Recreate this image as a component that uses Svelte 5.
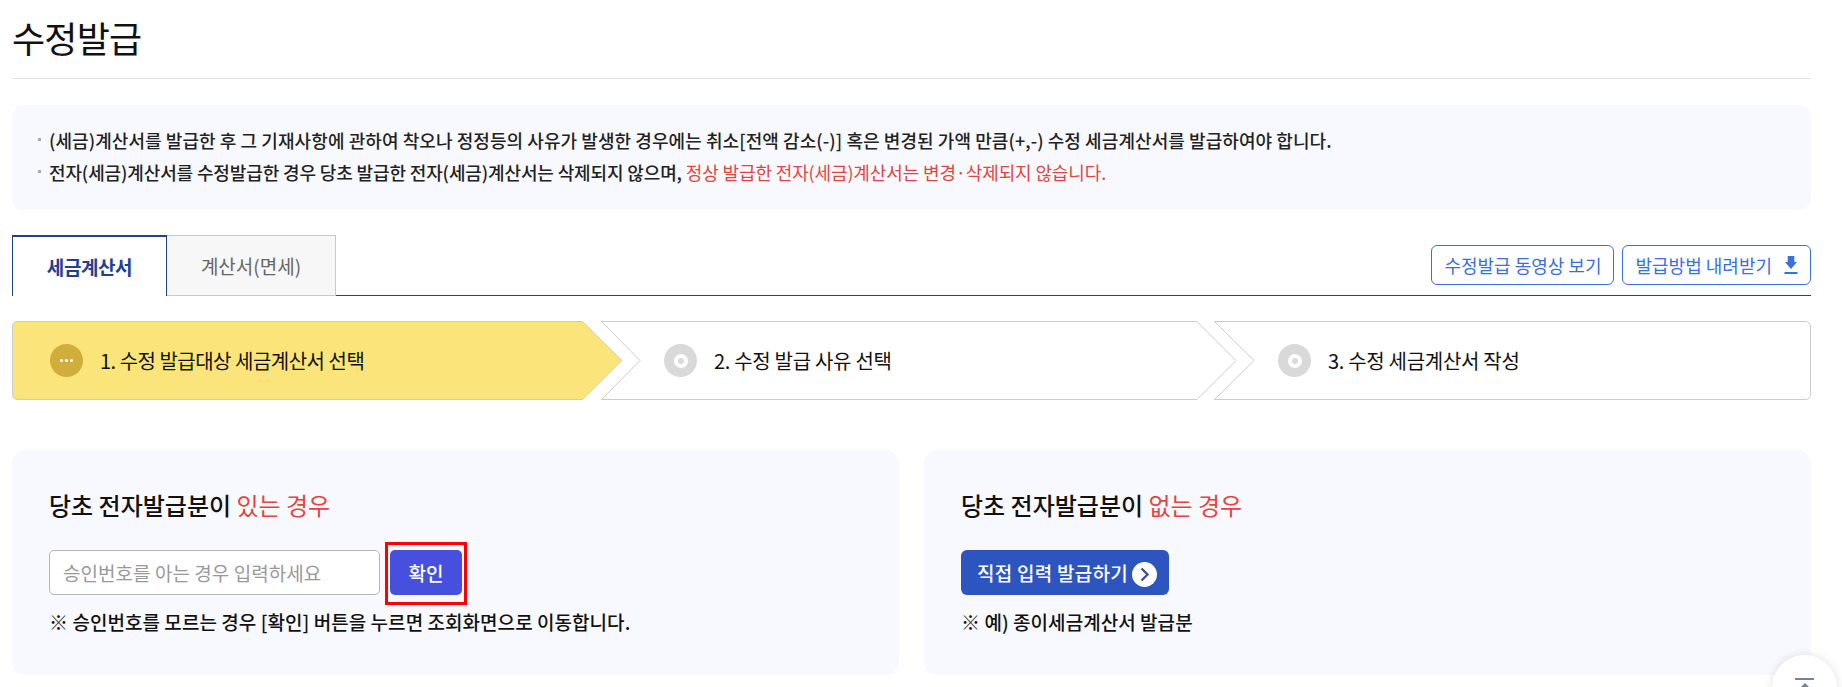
<script>
  const notices = [
    { text: '(세금)계산서를 발급한 후 그 기재사항에 관하여 착오나 정정등의 사유가 발생한 경우에는 취소[전액 감소(-)] 혹은 변경된 가액 만큼(+,-) 수정 세금계산서를 발급하여야 합니다.' },
    { text: '전자(세금)계산서를 수정발급한 경우 당초 발급한 전자(세금)계산서는 삭제되지 않으며, ', red: '정상 발급한 전자(세금)계산서는 변경·삭제되지 않습니다.' }
  ];

  const steps = [
    { label: '1. 수정 발급대상 세금계산서 선택', active: true },
    { label: '2. 수정 발급 사유 선택' },
    { label: '3. 수정 세금계산서 작성' }
  ];
</script>

<div class="page">
  <h1>수정발급</h1>

  <ul class="notice">
    {#each notices as item}
      <li>{item.text}{#if item.red}<span class="red">{item.red}</span>{/if}</li>
    {/each}
  </ul>

  <div class="tabs">
    <button class="tab active">세금계산서</button>
    <button class="tab">계산서(면세)</button>
    <div class="tab-actions">
      <button class="outline">수정발급 동영상 보기</button>
      <button class="outline">
        발급방법 내려받기
        <svg width="14" height="18" viewBox="0 0 14 18" aria-hidden="true">
          <path d="M3.7 0h6.6v6H13L7 13 1 6h2.7z" fill="#3a6fdc" />
          <rect x="0.5" y="16" width="13" height="2" fill="#3a6fdc" />
        </svg>
      </button>
    </div>
  </div>

  <div class="stepper">
    <svg class="step-bg" width="1799" height="79" viewBox="0 0 1799 79" aria-hidden="true">
      <path d="M6 .5H570.5L610 39.5 570.5 78.5H6Q.5 78.5 .5 73V6Q.5 .5 6 .5Z" fill="#fbe47a" stroke="#cbcbcb" />
      <path d="M589.5 .5H1185L1224 39.5 1185 78.5H589.5L628 39.5Z" fill="#fff" stroke="#cbcbcb" />
      <path d="M1202.5 .5H1793Q1798.5 .5 1798.5 6V73Q1798.5 78.5 1793 78.5H1202.5L1242 39.5Z" fill="#fff" stroke="#cbcbcb" />
    </svg>
    {#each steps as step}
      <div class="step" class:current={step.active}>
        {#if step.active}
          <span class="badge active"><i></i><i></i><i></i></span>
        {:else}
          <span class="badge"><b></b></span>
        {/if}
        <span class="step-label">{step.label}</span>
      </div>
    {/each}
  </div>

  <div class="cards">
    <section class="card">
      <h2>당초 전자발급분이 <span class="red">있는 경우</span></h2>
      <div class="row">
        <input type="text" placeholder="승인번호를 아는 경우 입력하세요" />
        <button class="confirm">확인</button>
      </div>
      <p>※ 승인번호를 모르는 경우 [확인] 버튼을 누르면 조회화면으로 이동합니다.</p>
    </section>
    <section class="card">
      <h2>당초 전자발급분이 <span class="red">없는 경우</span></h2>
      <div class="row">
        <button class="direct">
          직접 입력 발급하기
          <svg width="25" height="25" viewBox="0 0 25 25" aria-hidden="true">
            <circle cx="12.5" cy="12.5" r="12.5" fill="#fff" />
            <path d="M9.5 6.5l6 6-6 6" fill="none" stroke="#3f4fa8" stroke-width="2.4" />
          </svg>
        </button>
      </div>
      <p>※ 예) 종이세금계산서 발급분</p>
    </section>
  </div>

  <button class="to-top" aria-label="맨 위로">
    <span class="bar"></span>
    <span class="arrow"></span>
  </button>
</div>

<style>
  :global(body) {
    margin: 0;
    background: #fff;
    overflow: hidden;
  }

  .page {
    padding: 0 31px 12px 12px;
    font-family: "Noto Sans CJK KR", "Noto Sans", sans-serif;
    color: #111;
  }

  button {
    font-family: inherit;
    cursor: pointer;
  }

  h1 {
    margin: 0;
    height: 78px;
    border-bottom: 1px solid #e6e6e6;
    font-size: 36px;
    font-weight: 400;
    line-height: 74px;
    letter-spacing: -0.8px;
  }

  .red {
    color: #e2453f;
  }

  .notice {
    margin: 26px 0 25px;
    padding: 19px 37px 20px;
    height: 105px;
    box-sizing: border-box;
    list-style: none;
    background: #f8f9fe;
    border-radius: 12px;
  }

  .notice li {
    position: relative;
    font-size: 18px;
    font-weight: 500;
    line-height: 32px;
    letter-spacing: 0.07px;
    color: #222;
  }

  .notice li:last-child {
    letter-spacing: -0.13px;
  }

  .notice .red {
    font-weight: 400;
  }

  .notice li::before {
    content: '';
    position: absolute;
    left: -11px;
    top: 14px;
    width: 3px;
    height: 3px;
    background: #aaa;
  }

  .tabs {
    display: flex;
    align-items: flex-end;
    height: 60px;
    border-bottom: 1px solid #23408f;
  }

  .tab {
    height: 61px;
    margin-bottom: -1px;
    box-sizing: border-box;
    width: 169px;
    padding: 0;
    background: #f7f7f7;
    border: 1px solid #c8c8c8;
    border-left: 0;
    font-size: 19px;
    color: #666;
  }

  .tab.active {
    width: 155px;
    background: #fff;
    border: 1px solid #23408f;
    border-top-width: 2px;
    border-bottom: 0;
    font-weight: 700;
    letter-spacing: -0.4px;
    color: #23408f;
  }

  .tab-actions {
    display: flex;
    gap: 8px;
    margin: 0 0 10px auto;
  }

  .outline {
    display: flex;
    align-items: center;
    justify-content: center;
    gap: 12px;
    height: 40px;
    padding: 0 12px;
    background: #fff;
    border: 1px solid #3a6fdc;
    border-radius: 6px;
    font-size: 18px;
    color: #3a6fdc;
  }

  .stepper {
    position: relative;
    display: grid;
    grid-template-columns: repeat(3, 614px);
    margin-top: 25px;
    height: 79px;
  }

  .step-bg {
    position: absolute;
    inset: 0;
  }

  .step {
    position: relative;
    display: flex;
    align-items: center;
    gap: 17px;
    padding-left: 38px;
  }

  .badge {
    display: flex;
    align-items: center;
    justify-content: center;
    flex: none;
    gap: 2px;
    width: 33px;
    height: 33px;
    border-radius: 50%;
    background: #d9d9d9;
  }

  .badge.active {
    background: #cfae3a;
  }

  .badge i {
    width: 3px;
    height: 3px;
    border-radius: 50%;
    background: #fff;
  }

  .badge b {
    width: 6px;
    height: 6px;
    border: 4px solid #fff;
    border-radius: 50%;
  }

  .step-label {
    font-size: 20px;
    letter-spacing: -0.3px;
  }

  .step.current .step-label {
    letter-spacing: -0.5px;
  }

  .cards {
    display: grid;
    grid-template-columns: 1fr 1fr;
    gap: 25px;
    margin-top: 50px;
  }

  .card {
    height: 225px;
    box-sizing: border-box;
    padding: 36px 37px 0;
    background: #f8f9fe;
    border-radius: 14px;
  }

  h2 {
    margin: 0;
    font-size: 24px;
    font-weight: 500;
    line-height: 38px;
  }

  h2 .red {
    font-weight: 400;
  }

  .row {
    display: flex;
    gap: 10px;
    margin-top: 26px;
  }

  input {
    width: 331px;
    height: 45px;
    box-sizing: border-box;
    padding: 0 13px;
    background: #fff;
    border: 1px solid #b5b5b5;
    border-radius: 5px;
    font-family: inherit;
    font-size: 19px;
    letter-spacing: 0.05px;
  }

  input::placeholder {
    color: #999;
  }

  .confirm {
    position: relative;
    width: 72px;
    height: 45px;
    padding: 0;
    background: #4650dd;
    border: 0;
    border-radius: 5px;
    font-size: 19px;
    font-weight: 500;
    color: #fff;
  }

  .confirm::after {
    content: '';
    position: absolute;
    inset: -8px -5px -10px;
    border: 3px solid #f00;
  }

  .direct {
    display: flex;
    align-items: center;
    gap: 4px;
    height: 45px;
    padding: 0 12px 0 16px;
    background: #2d55c0;
    border: 0;
    border-radius: 6px;
    font-size: 19px;
    font-weight: 500;
    letter-spacing: 0.25px;
    color: #fff;
  }

  .direct svg {
    margin-top: 4px;
  }

  p {
    margin: 11px 0 0;
    font-size: 19px;
    font-weight: 500;
    line-height: 32px;
    letter-spacing: 0.05px;
  }

  .to-top {
    position: fixed;
    left: 1772px;
    top: 655px;
    display: flex;
    flex-direction: column;
    align-items: center;
    gap: 3px;
    width: 65px;
    height: 65px;
    padding: 23px 0 0;
    background: #fff;
    border: 0;
    border-radius: 50%;
    box-shadow: 0 0 10px rgba(0, 0, 0, 0.12);
  }

  .bar {
    width: 19px;
    height: 2px;
    background: #7c7f9a;
  }

  .arrow {
    width: 0;
    height: 0;
    border: 5px solid transparent;
    border-top: 0;
    border-bottom-color: #7c7f9a;
  }
</style>
